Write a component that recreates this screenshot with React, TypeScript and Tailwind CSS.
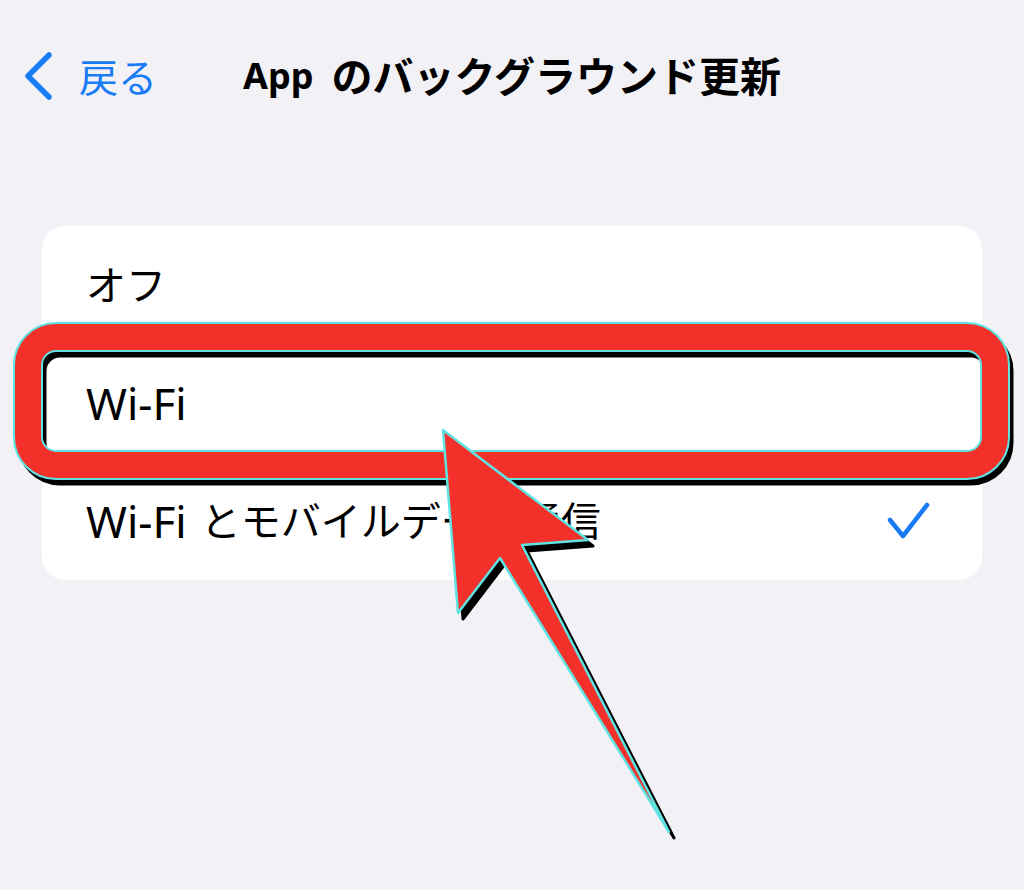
import React from 'react';

const FONT = { fontFamily: '"Noto Sans", "Noto Sans CJK JP", sans-serif' };

const Row: React.FC<{ children: React.ReactNode; checked?: boolean }> = ({ children, checked = false }) => (
  <div className="h-[118px] flex items-center justify-between pl-[44px] pr-[52px]">
    <div className="text-[40px] text-black leading-none flex items-center">{children}</div>
    {checked && (
      <svg width="44" height="40" viewBox="0 0 44 40">
        <path d="M4 19 L17 35 L41 4" stroke="#1a7cf4" strokeWidth="4.5" fill="none" strokeLinecap="round" strokeLinejoin="round" />
      </svg>
    )}
  </div>
);

const Annotation: React.FC = () => {
  const ring = 'M56 337 H967 A28 28 0 0 1 995 365 V437 A28 28 0 0 1 967 465 H56 A28 28 0 0 1 28 437 V365 A28 28 0 0 1 56 337 Z';
  const arrow = '443,430 588,540 522,545 669,832 500,558 458,613';
  return (
    <svg className="absolute inset-0 pointer-events-none" width="1024" height="890" viewBox="0 0 1024 890">
      <path d={ring} transform="translate(4 6)" stroke="#000" strokeWidth="29" fill="none" />
      <path d={ring} stroke="#5fe3e3" strokeWidth="30" fill="none" />
      <path d={ring} stroke="#f4302a" strokeWidth="26" fill="none" />
      <polygon points={arrow} transform="translate(5 6)" fill="#000" stroke="#000" strokeWidth="3" strokeLinejoin="round" />
      <polygon points={arrow} fill="#f4302a" stroke="#5fe3e3" strokeWidth="2.5" strokeLinejoin="round" />
    </svg>
  );
};

export default function App() {
  return (
    <div className="relative w-[1024px] h-[890px] overflow-hidden bg-[#f2f1f6]" style={FONT}>
      <header className="grid grid-cols-[1fr_auto_1fr] items-center h-[76px] mt-[38px]">
        <div className="flex items-center pl-[23px] gap-[26px] text-[#1a7cf4]">
          <svg width="30" height="48" viewBox="0 0 30 48">
            <path d="M26 3 L5 24 L26 45" stroke="#1a7cf4" strokeWidth="5.5" fill="none" strokeLinecap="round" strokeLinejoin="round" />
          </svg>
          <span className="text-[39px] leading-none">戻る</span>
        </div>
        <h1 className="text-[41px] font-bold text-black leading-none flex items-center gap-[18px]">
          <span className="text-[36px]">App</span>
          <span>のバックグラウンド更新</span>
        </h1>
        <div />
      </header>

      <div className="mx-[42px] mt-[112px] bg-white rounded-[24px] overflow-hidden">
        <Row>オフ</Row>
        <Row>
          <span className="text-[44px]">Wi-Fi</span>
        </Row>
        <Row checked>
          <span className="text-[44px] mr-[14px]">Wi-Fi</span>
          <span>とモバイルデータ通信</span>
        </Row>
      </div>

      <Annotation />
    </div>
  );
}
